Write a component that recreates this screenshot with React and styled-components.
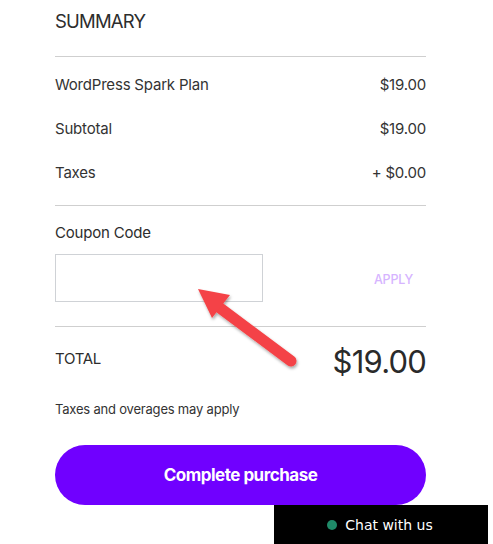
import React from "react";
import styled, { createGlobalStyle } from "styled-components";

const Global = createGlobalStyle`
  html, body { margin: 0; padding: 0; background: #fff; }
  body { font-family: Inter, "Liberation Sans", Arial, sans-serif; color: #333; }
  * { box-sizing: border-box; }
`;

const Page = styled.div`
  position: relative;
  width: 493px;
  height: 544px;
  overflow: hidden;
  padding: 0 67px 0 55px;
`;

const Title = styled.h2`
  margin: 0;
  height: 57px;
  padding-top: 10px;
  font-size: 18.5px;
  font-weight: 400;
  letter-spacing: -0.8px;
  color: #2d2d2d;
  line-height: 22px;
  border-bottom: 1px solid #cfcfcf;
`;

const Section = styled.div`
  display: flex;
  flex-direction: column;
  padding: ${(p) => p.$pad || "0"};
  border-bottom: ${(p) => (p.$divider ? "1px solid #cfcfcf" : "none")};
`;

const Row = styled.div`
  display: flex;
  justify-content: space-between;
  align-items: center;
  height: 44px;
  font-size: 15px;
  letter-spacing: -0.2px;
  color: #333;
`;

const Label = styled.div`
  font-size: 15px;
  letter-spacing: -0.2px;
  color: #2d2d2d;
  line-height: 20px;
`;

const CouponRow = styled.div`
  display: flex;
  align-items: center;
  justify-content: space-between;
  margin-top: 11px;
`;

const CouponInput = styled.input`
  width: 208px;
  height: 48px;
  border: 1px solid #cfd2d6;
  border-radius: 0;
  outline: none;
  background: #fff;
`;

const ApplyButton = styled.button`
  border: none;
  background: none;
  padding: 2px 13px 0 0;
  font-family: inherit;
  font-size: 12.5px;
  font-weight: 500;
  color: #d6b4ff;
  letter-spacing: -0.2px;
`;

const TotalRow = styled.div`
  display: flex;
  justify-content: space-between;
  align-items: center;
  height: 64px;
`;

const TotalLabel = styled.span`
  font-size: 15px;
  letter-spacing: -0.3px;
  color: #2d2d2d;
  margin-top: -1px;
`;

const TotalValue = styled.span`
  font-size: 31px;
  letter-spacing: -0.8px;
  color: #2a2a2a;
  margin-top: 4px;
`;

const Note = styled.p`
  margin: 9px 0 0;
  font-size: 13px;
  letter-spacing: -0.2px;
  line-height: 18px;
  color: #333;
`;

const PurchaseButton = styled.button`
  margin-top: 27px;
  width: 100%;
  height: 60px;
  border: none;
  border-radius: 30px;
  background: #7000ff;
  color: #fff;
  font-family: inherit;
  font-size: 17px;
  font-weight: 700;
  letter-spacing: -0.5px;
`;

const Chat = styled.div`
  position: absolute;
  left: 274px;
  top: 505px;
  width: 214px;
  height: 40px;
  background: #000;
  color: #fff;
  display: flex;
  align-items: center;
  justify-content: center;
  gap: 8px;
  padding-right: 2px;
  font-family: "DejaVu Sans", Verdana, sans-serif;
  font-size: 14px;
`;

const Dot = styled.span`
  width: 10px;
  height: 10px;
  border-radius: 50%;
  background: #1f8a68;
`;

const Arrow = styled.svg`
  position: absolute;
  left: 180px;
  top: 270px;
  overflow: visible;
`;

export default function App() {
  return (
    <>
      <Global />
      <Page>
        <Title>SUMMARY</Title>
        <Section $divider $pad="5px 0 11px">
          <Row><span>WordPress Spark Plan</span><span>$19.00</span></Row>
          <Row><span>Subtotal</span><span>$19.00</span></Row>
          <Row><span>Taxes</span><span>+ $0.00</span></Row>
        </Section>
        <Section $divider $pad="17px 0 24px">
          <Label>Coupon Code</Label>
          <CouponRow>
            <CouponInput aria-label="Coupon code" />
            <ApplyButton>APPLY</ApplyButton>
          </CouponRow>
        </Section>
        <TotalRow>
          <TotalLabel>TOTAL</TotalLabel>
          <TotalValue>$19.00</TotalValue>
        </TotalRow>
        <Note>Taxes and overages may apply</Note>
        <PurchaseButton>Complete purchase</PurchaseButton>
        <Arrow width="130" height="110" viewBox="0 0 130 110">
          <defs>
            <filter id="sh" x="-30%" y="-30%" width="160%" height="160%">
              <feDropShadow dx="1" dy="2" stdDeviation="1.5" floodColor="#000" floodOpacity="0.35" />
            </filter>
          </defs>
          <g filter="url(#sh)">
            <line x1="40" y1="38" x2="111" y2="91" stroke="#f44346" strokeWidth="11" strokeLinecap="round" />
            <polygon points="18,19 50,25 32,48" fill="#f44346" />
          </g>
        </Arrow>
        <Chat><Dot />Chat with us</Chat>
      </Page>
    </>
  );
}
